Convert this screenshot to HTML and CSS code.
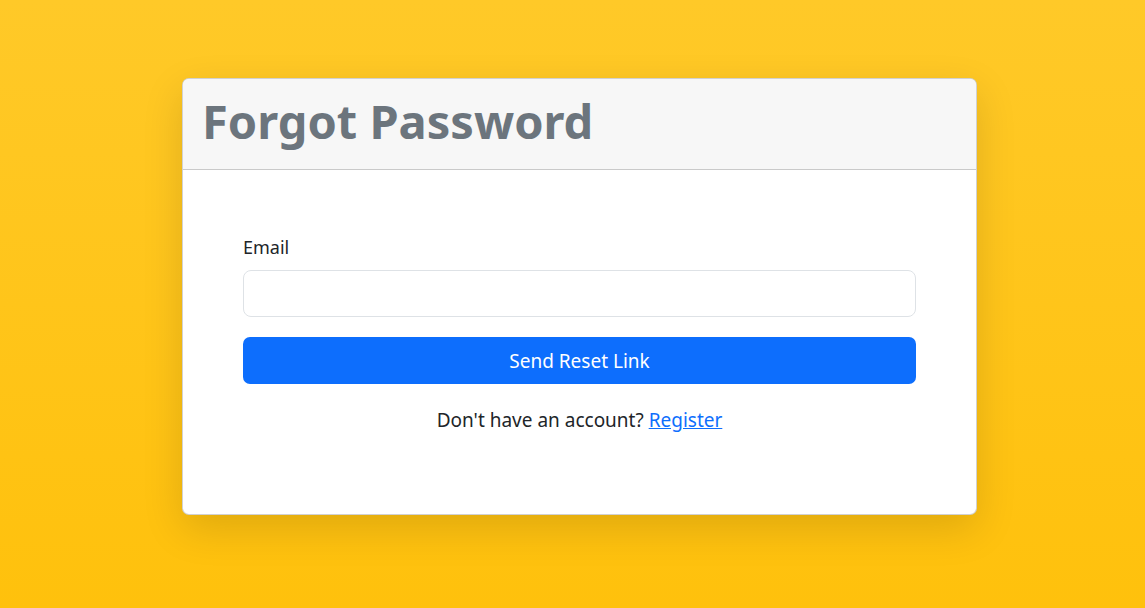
FILE: index.html
```html
<!DOCTYPE html>
<html lang="en">
<head>
  <meta charset="UTF-8" />
  <meta name="viewport" content="width=device-width, initial-scale=1" />
  <title>Forgot Password</title>
  <link rel="stylesheet" href="styles.css">
</head>
<body>

<div class="card">
  <div class="card-header">
    <h1>Forgot Password</h1>
  </div>
  <div class="card-body">
    <form id="resetForm">
      <label for="email">Email</label>
      <input type="email" id="email" required />
      <button type="submit">Send Reset Link</button>
    </form>
    <p class="register">Don't have an account? <a href="#">Register</a></p>
  </div>
</div>

</body>
</html>
```

FILE: styles.css
```css
html {
  height: 100%;
}
body {
  font-family: "Noto Sans", "Open Sans", sans-serif;
  margin: 0;
  min-height: 100%;
  background: linear-gradient(#ffc928, #ffc10c);
  color: #212529;
  padding-top: 78px;
  box-sizing: border-box;
}
.card {
  width: 795px;
  margin-left: 182px;
  background: #fff;
  border: 1px solid rgba(0, 0, 0, 0.18);
  border-radius: 7px;
  box-shadow: 0 14px 40px rgba(0, 0, 0, 0.13);
  box-sizing: border-box;
  overflow: hidden;
}
.card-header {
  background: #f7f7f7;
  border-bottom: 1px solid rgba(0, 0, 0, 0.18);
  padding: 11px 19px;
  height: 91px;
  box-sizing: border-box;
}
.card-header h1 {
  margin: 0;
  font-size: 47px;
  line-height: 62px;
  font-weight: 700;
  color: #6c757d;
}
.card-body {
  padding: 62px 60px 63px;
}
label {
  display: block;
  font-size: 18px;
  line-height: 30px;
  margin-bottom: 8px;
}
input {
  display: block;
  width: 100%;
  height: 47px;
  font-size: 19px;
  padding: 8px 16px;
  border: 1px solid #dee2e6;
  border-radius: 8px;
  box-sizing: border-box;
  font-family: inherit;
}
button {
  display: block;
  width: 100%;
  height: 47px;
  margin-top: 20px;
  background: #0d6efd;
  color: #fff;
  border: none;
  border-radius: 7px;
  font-size: 19px;
  font-family: inherit;
  cursor: pointer;
}
button:hover {
  background: #0b5ed7;
}
.register {
  text-align: center;
  font-size: 19px;
  line-height: 30px;
  margin: 21px 0 16px;
}
.register a {
  color: #0d6efd;
}
```
